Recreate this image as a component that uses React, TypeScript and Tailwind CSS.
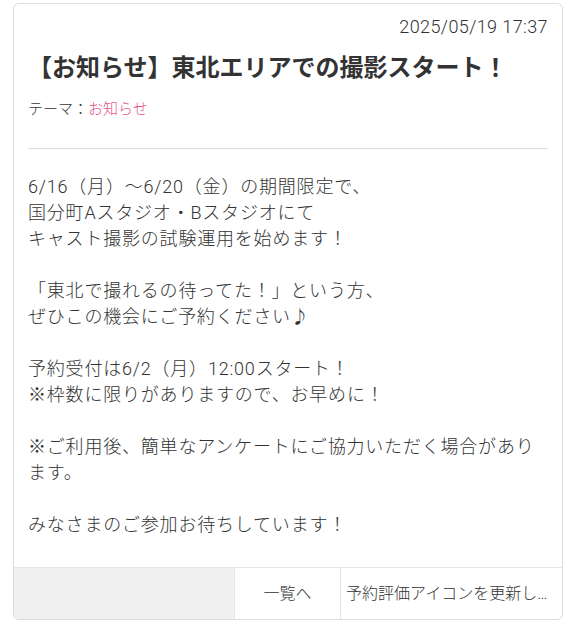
export default function App() {
  const font = { fontFamily: 'Roboto, "Noto Sans CJK JP", "Noto Sans", sans-serif' }
  return (
    <div className="min-h-screen bg-white pt-[3px] px-[13px] text-[#333]" style={font}>
      <div className="border border-[#dddddd] rounded-md overflow-hidden">
        <div className="px-[14px]">
          {/* Date */}
          <div className="pt-[11px] text-right text-[18px] leading-6 font-light tracking-[0.4px]">2025/05/19 17:37</div>

          {/* Title */}
          <h1 className="mt-[13px] text-2xl font-bold leading-[32px]">【お知らせ】東北エリアでの撮影スタート！</h1>

          {/* Theme */}
          <div className="mt-[13px] text-[15px] leading-6 font-light">
            テーマ：<span className="text-[#e3548b]">お知らせ</span>
          </div>

          <div className="mt-[27px] border-t border-[#dcdcdc]"></div>

          {/* Body */}
          <div className="pt-[25px] pb-[29px] text-[18px] leading-[26px] tracking-[0.8px] font-light">
            6/16（月）～6/20（金）の期間限定で、<br />
            国分町Aスタジオ・Bスタジオにて<br />
            キャスト撮影の試験運用を始めます！<br />
            <br />
            「東北で撮れるの待ってた！」という方、<br />
            ぜひこの機会にご予約ください♪<br />
            <br />
            予約受付は6/2（月）12:00スタート！<br />
            ※枠数に限りがありますので、お早めに！<br />
            <br />
            ※ご利用後、簡単なアンケートにご協力いただく場合があります。<br />
            <br />
            みなさまのご参加お待ちしています！
          </div>
        </div>

        {/* Footer nav */}
        <div className="flex h-[52px] border-t border-[#e6e6e6] text-base font-light">
          <a className="flex-1 bg-[#f0f0f0]"></a>
          <a className="w-[106px] flex items-center justify-center border-l border-[#e6e6e6]">一覧へ</a>
          <a className="w-[222px] flex items-center border-l border-[#e6e6e6] pl-[5px] pr-[6px] min-w-0">
            <span className="truncate">予約評価アイコンを更新しました</span>
          </a>
        </div>
      </div>
    </div>
  )
}
